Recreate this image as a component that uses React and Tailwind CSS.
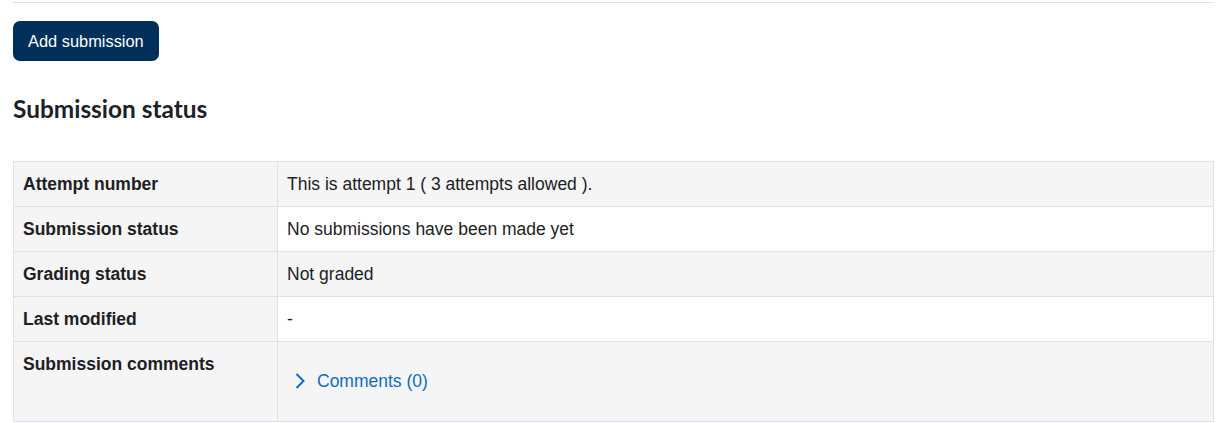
const rows = [
  { label: "Attempt number", value: "This is attempt 1 ( 3 attempts allowed ).", striped: true },
  { label: "Submission status", value: "No submissions have been made yet", striped: false },
  { label: "Grading status", value: "Not graded", striped: true },
  { label: "Last modified", value: "-", striped: false },
];

function Chevron() {
  return (
    <svg width="10" height="16" viewBox="0 0 10 16" className="shrink-0">
      <path d="M1.5 1 L8.5 8 L1.5 15" fill="none" stroke="#0f6cbf" strokeWidth="2" />
    </svg>
  );
}

export default function App() {
  return (
    <div
      className="bg-white min-h-[423px] pl-[13px] pr-[4px] text-[#1d2125]"
      style={{ fontFamily: '"Liberation Sans", Arial, sans-serif' }}
    >
      <div className="pt-[2px] border-b border-[#dee2e6]" />

      <button className="mt-[18px] h-[40px] px-[15px] rounded-[7px] bg-[#00305a] text-white text-[16.4px]">
        Add submission
      </button>

      <h2
        className="mt-[32px] text-[24.4px] font-bold leading-[32px] text-[#1d2125]"
        style={{ fontFamily: 'Lato, "Noto Sans", sans-serif' }}
      >
        Submission status
      </h2>

      <table className="mt-[36px] w-full border-collapse border border-[#dee2e6] text-[17.5px] leading-[24px]">
        <tbody>
          {rows.map((r) => (
            <tr key={r.label} className="border-b border-[#dee2e6]">
              <th className="w-[264px] bg-[#f5f5f5] border-r border-[#dee2e6] pl-[9px] pr-[10px] py-[10px] text-left font-bold align-top">
                {r.label}
              </th>
              <td className={`pl-[9px] pr-[10px] py-[10px] ${r.striped ? "bg-[#f5f5f5]" : "bg-white"}`}>
                {r.value}
              </td>
            </tr>
          ))}
          <tr>
            <th className="w-[264px] bg-[#f5f5f5] border-r border-[#dee2e6] pl-[9px] pr-[10px] py-[10px] text-left font-bold align-top">
              Submission comments
            </th>
            <td className="bg-[#f5f5f5] pl-[9px] pr-[10px] py-[10px]">
              <div className="flex items-center gap-[12px] pl-[8px] pt-[17px] pb-[18px]">
                <Chevron />
                <a href="#" className="text-[#0f6cbf]">
                  Comments (0)
                </a>
              </div>
            </td>
          </tr>
        </tbody>
      </table>
    </div>
  );
}
